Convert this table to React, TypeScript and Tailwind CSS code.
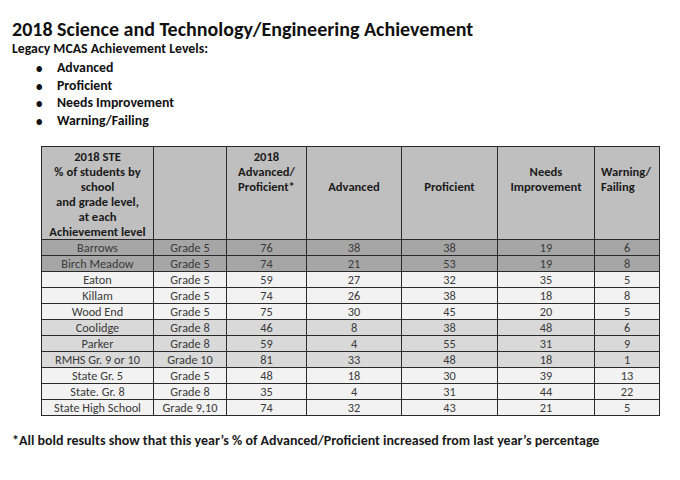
import React from "react";

const rows: { name: string; grade: string; vals: string[]; bg: string }[] = [
  { name: "Barrows", grade: "Grade 5", vals: ["76", "38", "38", "19", "6"], bg: "bg-[#a6a6a6]" },
  { name: "Birch Meadow", grade: "Grade 5", vals: ["74", "21", "53", "19", "8"], bg: "bg-[#a6a6a6]" },
  { name: "Eaton", grade: "Grade 5", vals: ["59", "27", "32", "35", "5"], bg: "bg-[#f2f2f2]" },
  { name: "Killam", grade: "Grade 5", vals: ["74", "26", "38", "18", "8"], bg: "bg-[#f2f2f2]" },
  { name: "Wood End", grade: "Grade 5", vals: ["75", "30", "45", "20", "5"], bg: "bg-[#f2f2f2]" },
  { name: "Coolidge", grade: "Grade 8", vals: ["46", "8", "38", "48", "6"], bg: "bg-[#d9d9d9]" },
  { name: "Parker", grade: "Grade 8", vals: ["59", "4", "55", "31", "9"], bg: "bg-[#d9d9d9]" },
  { name: "RMHS Gr. 9 or 10", grade: "Grade 10", vals: ["81", "33", "48", "18", "1"], bg: "bg-[#d9d9d9]" },
  { name: "State Gr. 5", grade: "Grade 5", vals: ["48", "18", "30", "39", "13"], bg: "bg-[#f2f2f2]" },
  { name: "State. Gr. 8", grade: "Grade 8", vals: ["35", "4", "31", "44", "22"], bg: "bg-[#f2f2f2]" },
  { name: "State High School", grade: "Grade 9,10", vals: ["74", "32", "43", "21", "5"], bg: "bg-[#f2f2f2]" },
];

const font = { fontFamily: "Carlito, Lato, 'Liberation Sans', sans-serif" };

export default function App() {
  return (
    <div className="w-[680px] h-[480px] bg-white text-[#111] overflow-hidden" style={font}>
      <div className="pl-[12px] pt-[18px]">
        <h1 className="text-[20px] font-bold leading-[23px] text-[#111]">
          2018 Science and Technology/Engineering Achievement
        </h1>
        <div className="text-[13.8px] font-bold leading-[16px]">Legacy MCAS Achievement Levels:</div>
        <ul className="mt-[3px]">
          {["Advanced", "Proficient", "Needs Improvement", "Warning/Failing"].map((t) => (
            <li key={t} className="flex items-center h-[17.5px] text-[13.8px] font-bold">
              <span className="w-[45px] pl-[24px] text-[13px]">•</span>
              <span>{t}</span>
            </li>
          ))}
        </ul>
      </div>
      <div className="pl-[41px] mt-[16px]">
        <table className="table-fixed border-collapse w-[618px] border-[1.5px] border-[#2a2a2a] text-[12.3px]">
          <colgroup>
            <col className="w-[112px]" />
            <col className="w-[73px]" />
            <col className="w-[80px]" />
            <col className="w-[95px]" />
            <col className="w-[96px]" />
            <col className="w-[97px]" />
            <col className="w-[65px]" />
          </colgroup>
          <thead>
            <tr className="bg-[#bfbfbf] font-bold text-[12.6px] text-[#1a1a1a] leading-[15px] align-top">
              <th className="border border-[#2a2a2a] pt-[2px] font-bold text-center">
                2018 STE
                <br />% of students by
                <br />school
                <br />and grade level,
                <br />at each
                <br />Achievement level
              </th>
              <th className="border border-[#2a2a2a]"></th>
              <th className="border border-[#2a2a2a] pt-[2px] font-bold text-center">
                2018
                <br />Advanced/
                <br />Proficient*
              </th>
              <th className="border border-[#2a2a2a] pt-[32px] font-bold text-center">Advanced</th>
              <th className="border border-[#2a2a2a] pt-[32px] font-bold text-center">Proficient</th>
              <th className="border border-[#2a2a2a] pt-[17px] font-bold text-center">
                Needs
                <br />
                Improvement
              </th>
              <th className="border border-[#2a2a2a] pt-[17px] pl-[6px] font-bold text-left">
                Warning/
                <br />
                Failing
              </th>
            </tr>
          </thead>
          <tbody>
            {rows.map((r) => (
              <tr key={r.name} className={`${r.bg} h-[16px] leading-[14px] text-[#3a3a3a]`}>
                <td className="border border-[#2a2a2a] text-center p-0">{r.name}</td>
                <td className="border border-[#2a2a2a] text-center p-0">{r.grade}</td>
                {r.vals.map((v, i) => (
                  <td key={i} className="border border-[#2a2a2a] text-center p-0">
                    {v}
                  </td>
                ))}
              </tr>
            ))}
          </tbody>
        </table>
      </div>
      <div className="pl-[12px] mt-[17px] text-[14px] font-bold leading-[16px] text-[#1a1a1a]">
        *All bold results show that this year’s % of Advanced/Proficient increased from last year’s percentage
      </div>
    </div>
  );
}
